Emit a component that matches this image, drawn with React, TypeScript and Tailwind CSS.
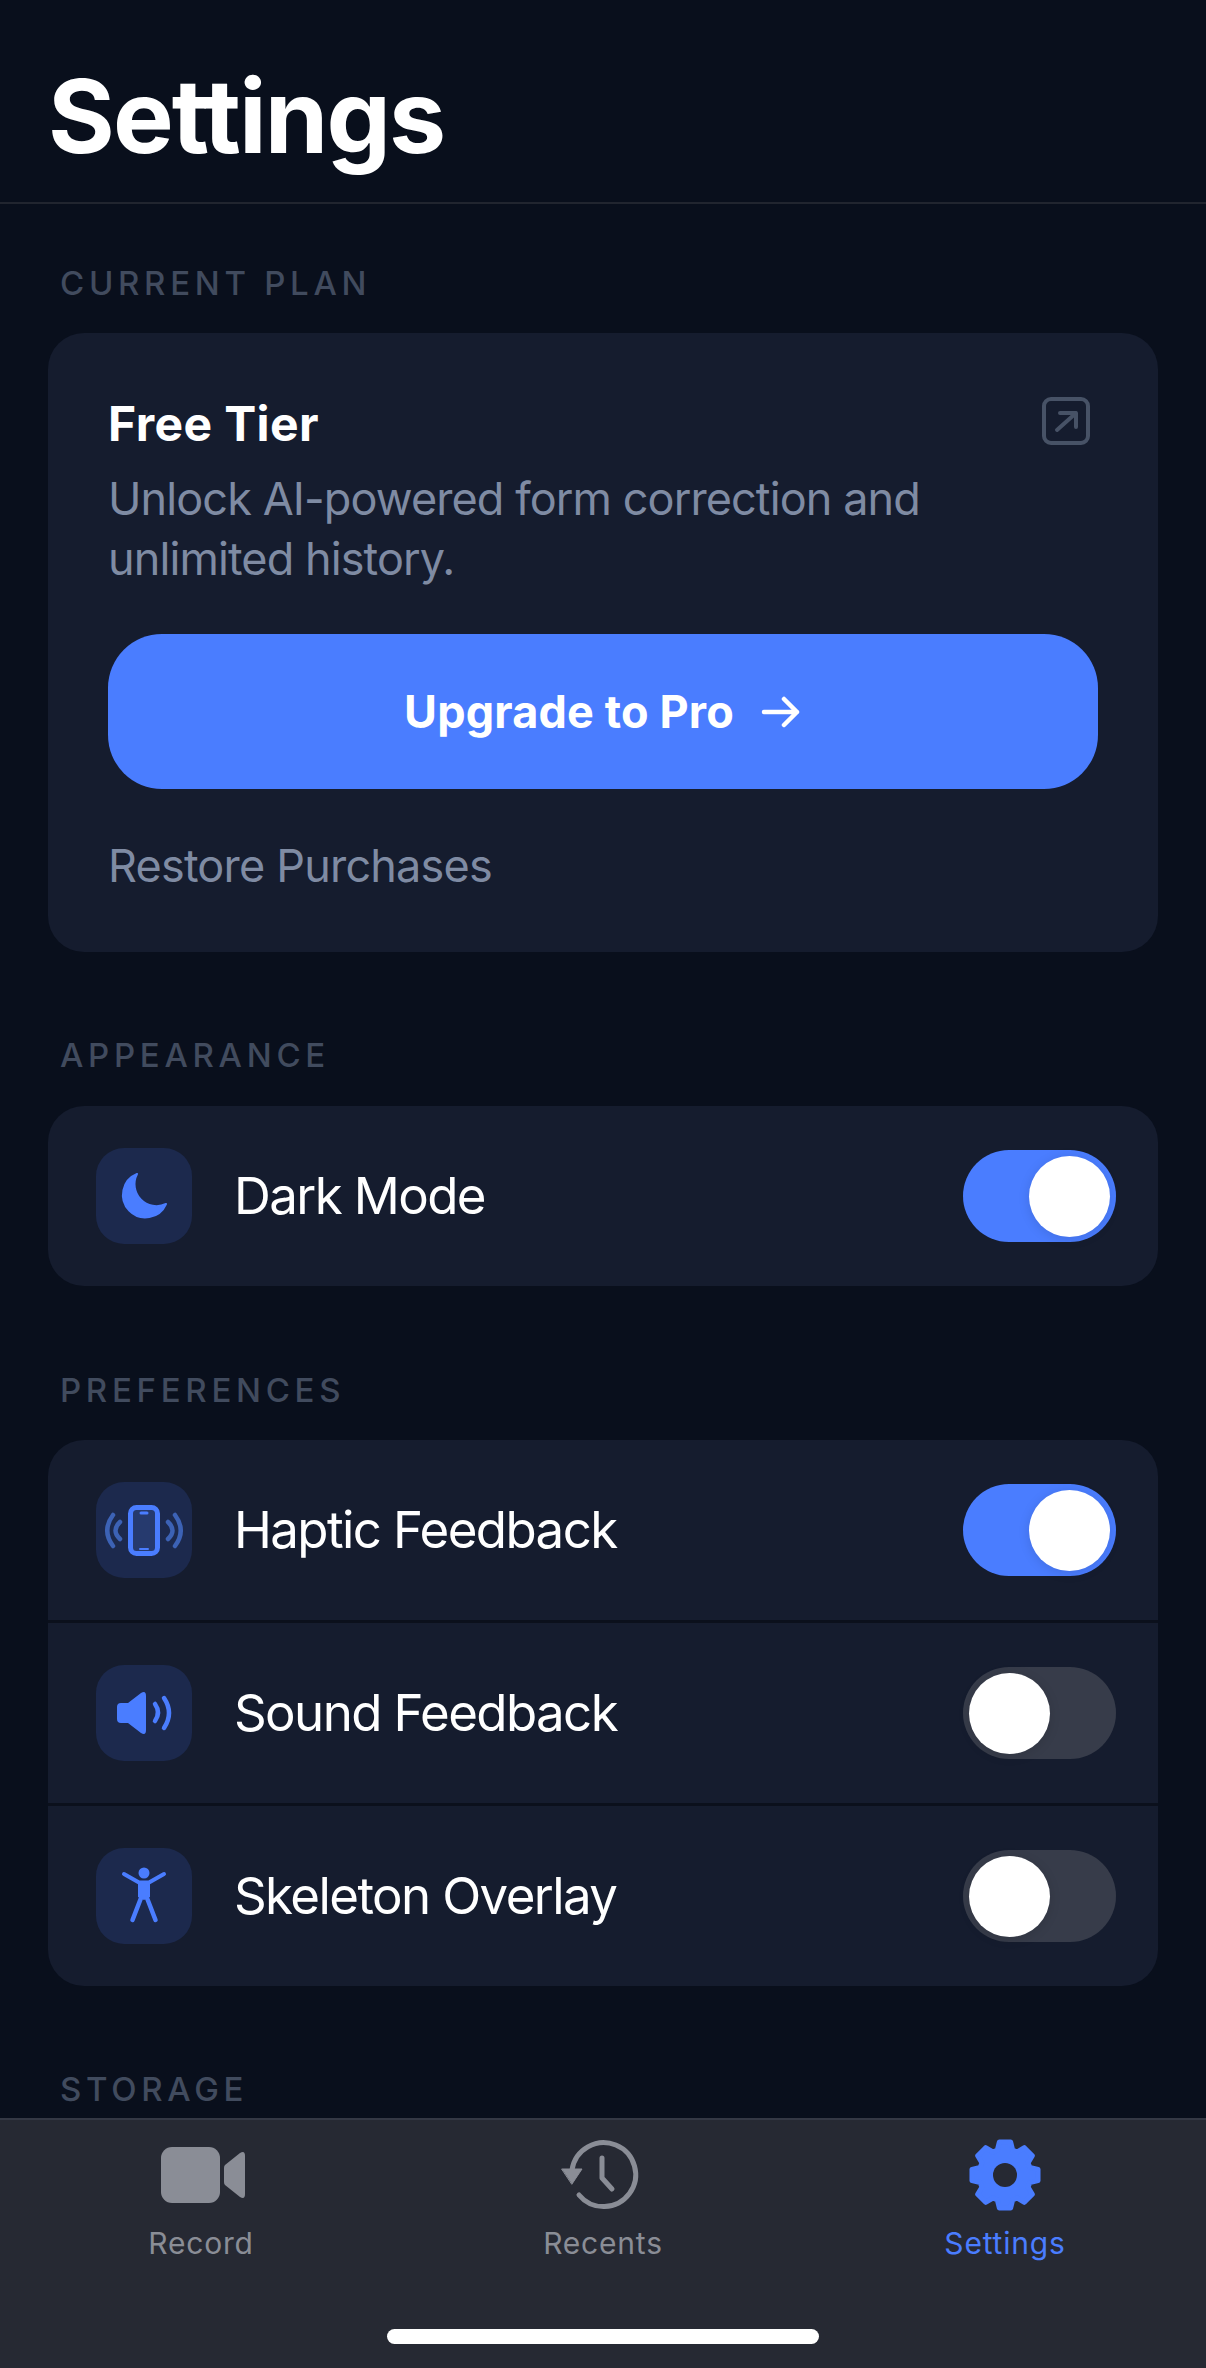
const gearPath = () => {
  const pts: string[] = []
  for (let i = 0; i < 8; i++) {
    const a = (i * Math.PI) / 4 - Math.PI / 2
    const at = (r: number, d: number) => {
      const x = 70 + r * Math.cos(a + d)
      const y = 40 + r * Math.sin(a + d)
      return `${x.toFixed(2)} ${y.toFixed(2)}`
    }
    pts.push(at(26, -0.3), at(33.5, -0.17), at(33.5, 0.17), at(26, 0.3))
  }
  return `M${pts.join('L')}Z`
}

function Moon() {
  return (
    <svg width="96" height="96" viewBox="0 0 96 96">
      <path d="M41 26A22.500 22.500 0 1 0 70 56A22 22 0 0 1 41 26Z" fill="#4a7dff" stroke="#4a7dff" strokeWidth="2" strokeLinejoin="round" />
    </svg>
  )
}

function Haptic() {
  return (
    <svg width="96" height="96" viewBox="0 0 96 96" fill="none" strokeLinecap="round">
      <path d="M17 33Q5.500 48.500 17 64M24 40Q15 48.500 24 57M79 33Q90.500 48.500 79 64M72 40Q81 48.500 72 57" stroke="#3c62b5" strokeWidth="4.500" />
      <rect x="34.500" y="25.500" width="27" height="46" rx="6" fill="#263a6e" stroke="#4a7dff" strokeWidth="5" />
      <path d="M45 31H51" stroke="#4a7dff" strokeWidth="3" />
      <path d="M44 67H52" stroke="#4a7dff" strokeWidth="2" />
    </svg>
  )
}

function Speaker() {
  return (
    <svg width="96" height="96" viewBox="0 0 96 96" fill="none" strokeLinecap="round">
      <path d="M25 38H32L45 28Q50 25 50 31V65Q50 71 45 68L32 58H25Q21 58 21 54V42Q21 38 25 38Z" fill="#4a7dff" />
      <path d="M59 39Q65 47.500 59 56M68 33Q78 48 68 63" stroke="#4a7dff" strokeWidth="4.500" />
    </svg>
  )
}

function Person() {
  return (
    <svg width="96" height="96" viewBox="0 0 96 96" fill="none" strokeLinecap="round" strokeLinejoin="round">
      <circle cx="48" cy="25" r="5.500" fill="#4a7dff" />
      <path d="M28 26L43 34.500H53L68 26" stroke="#4a7dff" strokeWidth="4" />
      <path d="M42 35H54V49L48 52L42 49Z" fill="#4a7dff" />
      <path d="M45 50L36.500 72M51 50L59.500 72" stroke="#4a7dff" strokeWidth="4.500" />
    </svg>
  )
}

function Toggle({ on }: { on: boolean }) {
  return (
    <div className={`flex h-[92px] w-[153px] items-center rounded-full p-[6px] ${on ? 'justify-end bg-[#4a7dff]' : 'justify-start bg-[#373c4a]'}`}>
      <div className="h-[81px] w-[81px] rounded-full bg-white shadow-[0_2px_12px_rgba(0,0,0,0.12)]" />
    </div>
  )
}

function SectionLabel({ children, className }: { children: string; className: string }) {
  return (
    <p className={`px-[12px] text-[33px] leading-[40px] font-medium tracking-[4.7px] text-[#414b5e] ${className}`}>{children}</p>
  )
}

function Row({ icon, label, on }: { icon: React.ReactNode; label: string; on: boolean }) {
  return (
    <div className="box-content flex h-[180px] items-center pr-[42px] pl-[48px]">
      <div className="flex h-[96px] w-[96px] items-center justify-center rounded-[28px] bg-[#1c294d]">{icon}</div>
      <span className="ml-[42px] flex-1 text-[51px] tracking-[-1.6px] text-white">{label}</span>
      <Toggle on={on} />
    </div>
  )
}

export default function App() {
  return (
    <div className="flex h-[2368px] w-[1206px] flex-col overflow-hidden bg-[#090f1c] font-['Inter',sans-serif]">
      <header className="h-[204px] shrink-0 border-b-2 border-[#21252f] pt-[54px] pl-[48px]">
        <h1 className="text-[102px] leading-[124px] font-bold tracking-[-1.9px] text-white">Settings</h1>
      </header>

      <main className="min-h-0 flex-1 overflow-hidden px-[48px] pt-[59px]">
        <SectionLabel className="">CURRENT PLAN</SectionLabel>
        <section className="relative mt-[30px] h-[619px] rounded-[36px] bg-[#151c2e] px-[60px] pt-[57px]">
          <h2 className="text-[48px] leading-[68px] font-bold tracking-[0.4px] text-white">Free Tier</h2>
          <svg className="absolute top-[62px] right-[66px]" width="52" height="52" viewBox="0 0 52 52" fill="none" stroke="#475266" strokeWidth="4" strokeLinecap="round" strokeLinejoin="round">
            <rect x="4" y="4" width="44" height="44" rx="7" />
            <path d="M17 35L36 18M20 18H36V32" />
          </svg>
          <p className="mt-[11px] text-[45px] leading-[60px] tracking-[-0.9px] text-[#7f8ba3]">
            Unlock AI-powered form correction and
            <br />
            unlimited history.
          </p>
          <button className="mt-[45px] flex h-[155px] w-full items-center justify-center rounded-[54px] bg-[#4a7dff] text-[45px] font-bold tracking-[0.15px] text-white">
            Upgrade to Pro
            <svg className="ml-[26px]" width="42" height="42" viewBox="0 0 42 42" fill="none" stroke="white" strokeWidth="4.500" strokeLinecap="round" strokeLinejoin="round">
              <path d="M4 21H37M24 8L37 21L24 34" />
            </svg>
          </button>
          <p className="mt-[47px] text-[45px] leading-[60px] tracking-[-0.8px] text-[#7f8ba3]">Restore Purchases</p>
        </section>

        <SectionLabel className="mt-[83px]">APPEARANCE</SectionLabel>
        <section className="mt-[31px] overflow-hidden rounded-[36px] bg-[#151c2e]">
          <Row icon={<Moon />} label="Dark Mode" on />
        </section>

        <SectionLabel className="mt-[84px]">PREFERENCES</SectionLabel>
        <section className="mt-[30px] divide-y-[3px] divide-[#0b101c] overflow-hidden rounded-[36px] bg-[#151c2e]">
          <Row icon={<Haptic />} label="Haptic Feedback" on />
          <Row icon={<Speaker />} label="Sound Feedback" on={false} />
          <Row icon={<Person />} label="Skeleton Overlay" on={false} />
        </section>

        <SectionLabel className="mt-[83px]">STORAGE</SectionLabel>
      </main>

      <nav className="h-[250px] shrink-0 border-t-2 border-[#343844] bg-[#262933]">
        <div className="grid grid-cols-3 pt-[15px]">
          <div className="flex flex-col items-center">
            <svg width="140" height="80" viewBox="0 0 140 80" fill="#8a8d96">
              <rect x="30" y="12" width="59" height="56" rx="11" />
              <path d="M94 30L109 18Q114 15 114 21V59Q114 65 109 62L94 50Q93 49 93 47V33Q93 31 94 30Z" />
            </svg>
            <span className="mt-[8px] text-[30px] leading-[40px] tracking-[0.8px] text-[#8a8d96]">Record</span>
          </div>
          <div className="flex flex-col items-center">
            <svg width="140" height="80" viewBox="0 0 140 80" fill="none" stroke="#8a8d96" strokeLinecap="round" strokeLinejoin="round">
              <path d="M39 35A32 32 0 1 1 46 60" strokeWidth="5" />
              <path d="M29 34H49L39 49Z" fill="#8a8d96" strokeWidth="1" />
              <path d="M69 23V43L79 54" strokeWidth="5" />
            </svg>
            <span className="mt-[8px] text-[30px] leading-[40px] tracking-[0.8px] text-[#8a8d96]">Recents</span>
          </div>
          <div className="flex flex-col items-center">
            <svg width="140" height="80" viewBox="0 0 140 80">
              <path d={gearPath()} fill="#4a7dff" stroke="#4a7dff" strokeWidth="5" strokeLinejoin="round" />
              <circle cx="70" cy="40" r="12" fill="#262933" />
            </svg>
            <span className="mt-[8px] text-[30px] leading-[40px] tracking-[0.8px] text-[#4a7dff]">Settings</span>
          </div>
        </div>
        <div className="mx-auto mt-[66px] h-[15px] w-[432px] rounded-full bg-white" />
      </nav>
    </div>
  )
}
